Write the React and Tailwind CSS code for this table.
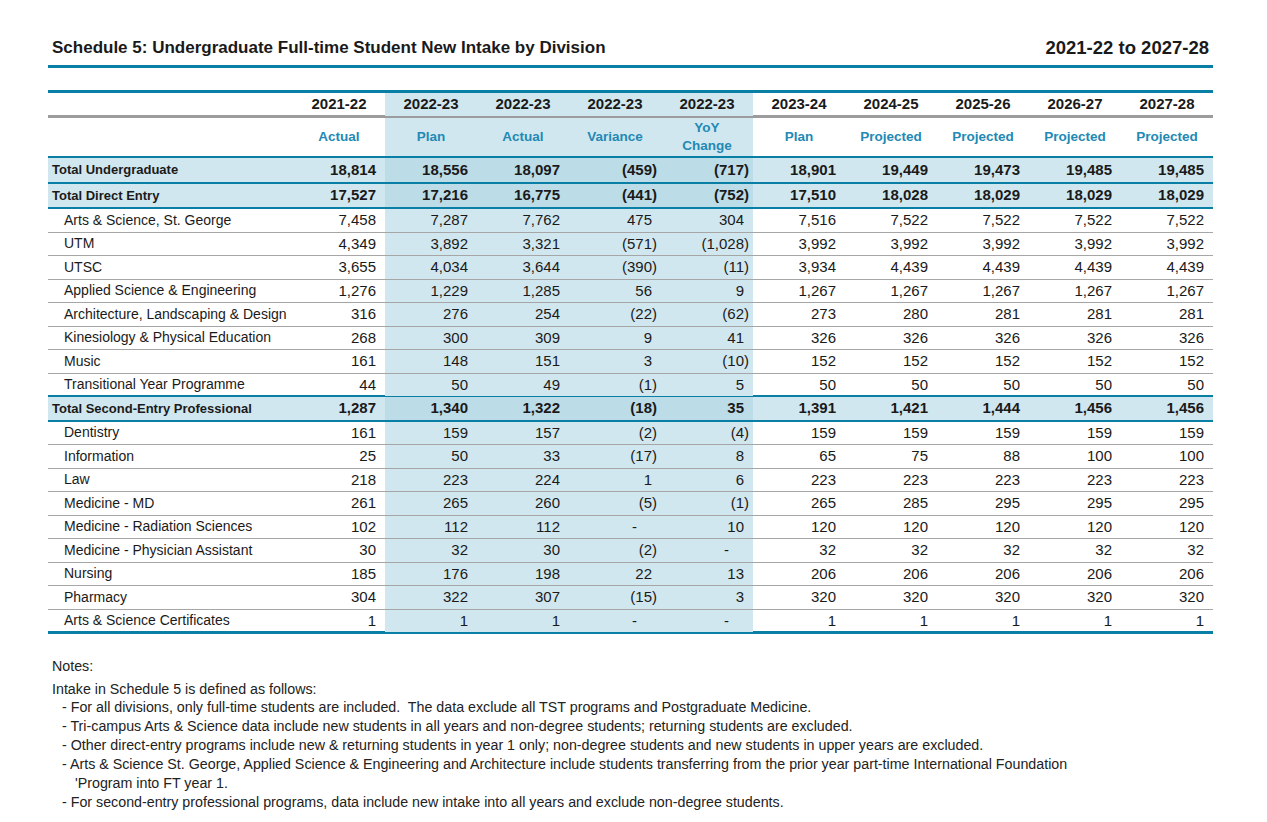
import React from 'react';

const years = ['2021-22', '2022-23', '2022-23', '2022-23', '2022-23', '2023-24', '2024-25', '2025-26', '2026-27', '2027-28'];
const kinds = ['Actual', 'Plan', 'Actual', 'Variance', 'YoY Change', 'Plan', 'Projected', 'Projected', 'Projected', 'Projected'];

const rows = [
    { label: 'Total Undergraduate', total: true, v: ['18,814', '18,556', '18,097', '(459)', '(717)', '18,901', '19,449', '19,473', '19,485', '19,485'] },
    { label: 'Total Direct Entry', total: true, v: ['17,527', '17,216', '16,775', '(441)', '(752)', '17,510', '18,028', '18,029', '18,029', '18,029'] },
    { label: 'Arts & Science, St. George', v: ['7,458', '7,287', '7,762', '475', '304', '7,516', '7,522', '7,522', '7,522', '7,522'] },
    { label: 'UTM', v: ['4,349', '3,892', '3,321', '(571)', '(1,028)', '3,992', '3,992', '3,992', '3,992', '3,992'] },
    { label: 'UTSC', v: ['3,655', '4,034', '3,644', '(390)', '(11)', '3,934', '4,439', '4,439', '4,439', '4,439'] },
    { label: 'Applied Science & Engineering', v: ['1,276', '1,229', '1,285', '56', '9', '1,267', '1,267', '1,267', '1,267', '1,267'] },
    { label: 'Architecture, Landscaping & Design', v: ['316', '276', '254', '(22)', '(62)', '273', '280', '281', '281', '281'] },
    { label: 'Kinesiology & Physical Education', v: ['268', '300', '309', '9', '41', '326', '326', '326', '326', '326'] },
    { label: 'Music', v: ['161', '148', '151', '3', '(10)', '152', '152', '152', '152', '152'] },
    { label: 'Transitional Year Programme', last: true, v: ['44', '50', '49', '(1)', '5', '50', '50', '50', '50', '50'] },
    { label: 'Total Second-Entry Professional', total: true, short: true, v: ['1,287', '1,340', '1,322', '(18)', '35', '1,391', '1,421', '1,444', '1,456', '1,456'] },
    { label: 'Dentistry', v: ['161', '159', '157', '(2)', '(4)', '159', '159', '159', '159', '159'] },
    { label: 'Information', v: ['25', '50', '33', '(17)', '8', '65', '75', '88', '100', '100'] },
    { label: 'Law', v: ['218', '223', '224', '1', '6', '223', '223', '223', '223', '223'] },
    { label: 'Medicine - MD', v: ['261', '265', '260', '(5)', '(1)', '265', '285', '295', '295', '295'] },
    { label: 'Medicine - Radiation Sciences', v: ['102', '112', '112', '-', '10', '120', '120', '120', '120', '120'] },
    { label: 'Medicine - Physician Assistant', v: ['30', '32', '30', '(2)', '-', '32', '32', '32', '32', '32'] },
    { label: 'Nursing', v: ['185', '176', '198', '22', '13', '206', '206', '206', '206', '206'] },
    { label: 'Pharmacy', v: ['304', '322', '307', '(15)', '3', '320', '320', '320', '320', '320'] },
    { label: 'Arts & Science Certificates', end: true, v: ['1', '1', '1', '-', '-', '1', '1', '1', '1', '1'] },
];

const notes = [
    '- For all divisions, only full-time students are included.  The data exclude all TST programs and Postgraduate Medicine.',
    '- Tri-campus Arts & Science data include new students in all years and non-degree students; returning students are excluded.',
    '- Other direct-entry programs include new & returning students in year 1 only; non-degree students and new students in upper years are excluded.',
    '- Arts & Science St. George, Applied Science & Engineering and Architecture include students transferring from the prior year part-time International Foundation',
];

const grid = 'grid grid-cols-[245px_repeat(10,92px)]';
const shaded = (i) => i >= 1 && i <= 4;

const Num = ({ value }) => {
    if (value === '-') return <span className="pr-[24px]">-</span>;
    if (value.startsWith('(')) return <span className="pr-[4px]">{value}</span>;
    return <span className="pr-[9px]">{value}</span>;
};

const Row = ({ row }) => {
    let border = 'h-[23.5px] border-b border-[#a6a6a6]';
    if (row.total) border = `${row.short ? 'h-[24.5px]' : 'h-[25.5px]'} border-b-2 border-[#0a7fa6] bg-[#d1e7ef]`;
    else if (row.last) border = 'h-[23.5px] border-b-2 border-[#0a7fa6]';
    else if (row.end) border = 'h-[24px] border-b-[3px] border-[#0a7fa6]';

    return (
        <div className={`${grid} ${border} ${row.total ? 'font-bold text-[13px]' : 'text-[14px]'}`}>
            <div className={`flex items-center ${row.total ? 'pl-[4px]' : 'pl-[16px]'}`}>{row.label}</div>
            {row.v.map((value, i) => (
                <div
                    key={i}
                    className={`flex items-center justify-end text-[15px] ${shaded(i) ? (row.total ? 'bg-[#bcdce7]' : 'bg-[#d1e7ef]') : ''}`}
                >
                    <Num value={value} />
                </div>
            ))}
        </div>
    );
};

export default function App() {
    return (
        <div className="min-h-[822px] bg-white text-[#1a1a1a] font-['Liberation_Sans',Arial,sans-serif]">
            <div className="w-[1165px] ml-[48px] pt-[36px]">
                <div className="flex justify-between items-center px-[4px] pb-[5px] border-b-[3px] border-[#0a7fa6]">
                    <h1 className="text-[17px] leading-[24px] font-bold">Schedule 5: Undergraduate Full-time Student New Intake by Division</h1>
                    <span className="text-[18.5px] leading-[24px] font-bold">2021-22 to 2027-28</span>
                </div>

                <div className="mt-[22px] border-t-[3px] border-[#0a7fa6]">
                    <div className={`${grid} h-[25px] border-b-[3px] border-[#9c9c9c] font-bold text-[15px]`}>
                        <div />
                        {years.map((y, i) => (
                            <div key={i} className={`flex items-center justify-center ${shaded(i) ? 'bg-[#d1e7ef]' : ''}`}>{y}</div>
                        ))}
                    </div>
                    <div className={`${grid} h-[40px] border-b-2 border-[#0a7fa6] font-bold text-[13.5px] text-[#2289b5]`}>
                        <div />
                        {kinds.map((k, i) => (
                            <div key={i} className={`flex items-center justify-center text-center leading-[18px] ${shaded(i) ? 'bg-[#d1e7ef]' : ''}`}>
                                {k === 'YoY Change' ? <span>YoY<br />Change</span> : k}
                            </div>
                        ))}
                    </div>
                    {rows.map((row) => (
                        <Row key={row.label} row={row} />
                    ))}
                </div>

                <div className="mt-[23px] text-[14.25px] leading-[19px] text-[#222]">
                    <p className="pl-[4px] mb-[5px]">Notes:</p>
                    <p className="pl-[4px] leading-[17px]">Intake in Schedule 5 is defined as follows:</p>
                    {notes.map((n) => (
                        <p key={n} className="pl-[14px] whitespace-pre">{n}</p>
                    ))}
                    <p className="pl-[27px]">'Program into FT year 1.</p>
                    <p className="pl-[14px]">- For second-entry professional programs, data include new intake into all years and exclude non-degree students.</p>
                </div>
            </div>
        </div>
    );
}
